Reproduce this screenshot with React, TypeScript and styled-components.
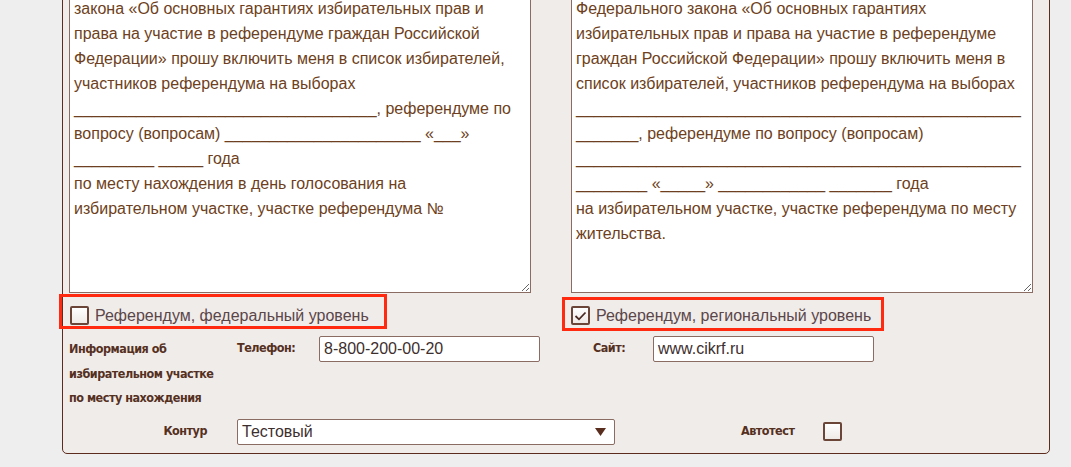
import React from "react";
import styled, { createGlobalStyle } from "styled-components";

const Global = createGlobalStyle`
  html, body { margin: 0; padding: 0; background: #eeeeee; overflow: hidden; }
  body { font-family: "Liberation Sans", Arial, sans-serif; }
  * { box-sizing: border-box; }
`;

const Page = styled.div`
  width: 1071px;
  height: 467px;
  overflow: hidden;
  padding-left: 62px;
`;

const Panel = styled.div`
  width: 988px;
  margin-top: -20px;
  padding: 12px 16px 8px 6px;
  background: #f0ece9;
  border: 1px solid #5c2d1e;
  border-radius: 0 0 5px 5px;
  display: flex;
  flex-direction: column;
`;

const Columns = styled.div`
  display: grid;
  grid-template-columns: 462px 462px;
  column-gap: 40px;
`;

const Column = styled.div`
  display: flex;
  flex-direction: column;
`;

const TextBox = styled.textarea`
  display: block;
  width: 462px;
  height: 300px;
  margin: 0;
  padding: 2px 4px;
  border: 1px solid #8a6c63;
  border-radius: 0;
  background: #ffffff;
  color: #6e3f20;
  font-family: "Liberation Sans", Arial, sans-serif;
  font-size: 16px;
  line-height: 25px;
  white-space: pre-wrap;
  overflow: hidden;
  outline: none;
`;

const CheckCell = styled.div`
  height: 43px;
  display: flex;
  align-items: flex-start;
`;

const Highlight = styled.label<{ $top: number; $left: number; $pl: number; $pt: number; $w: number; $h: number }>`
  display: flex;
  align-items: flex-start;
  gap: 6px;
  margin-top: ${(p) => p.$top}px;
  margin-left: ${(p) => p.$left}px;
  width: ${(p) => p.$w}px;
  height: ${(p) => p.$h}px;
  padding-left: ${(p) => p.$pl}px;
  padding-top: ${(p) => p.$pt}px;
  border: 3px solid #ff2a10;
`;

const Box = styled.span`
  flex: none;
  width: 19px;
  height: 19px;
  border: 2px solid #6a4538;
  border-radius: 2px;
  background: linear-gradient(#ffffff, #eeeae8);
  display: flex;
  align-items: center;
  justify-content: center;
`;

const CheckText = styled.span`
  font-family: "Liberation Sans", Arial, sans-serif;
  font-size: 16px;
  line-height: 19px;
  color: #5b4649;
  white-space: nowrap;
`;

const InfoRow = styled.div`
  display: grid;
  grid-template-columns: 168px 82px 221px 53px 60px 221px;
  align-items: start;
`;

const BoldLabel = styled.div<{ $right?: boolean }>`
  font-family: "Liberation Sans Narrow", "DejaVu Sans Condensed", "Roboto", sans-serif;
  font-weight: bold;
  font-size: 12.5px;
  letter-spacing: -0.5px;
  line-height: 24.5px;
  color: #55301f;
  white-space: nowrap;
  text-align: ${(p) => (p.$right ? "right" : "left")};
`;

const InfoText = styled(BoldLabel)`
  margin-top: 1px;
`;

const Field = styled.div<{ $width: number }>`
  width: ${(p) => p.$width}px;
  height: 26px;
  border: 1px solid #8a6c63;
  border-radius: 2px;
  background: #ffffff;
  padding: 0 4px;
  display: flex;
  align-items: center;
  justify-content: space-between;
  font-family: "Liberation Sans", Arial, sans-serif;
  font-size: 16px;
  color: #3e2f2f;
`;

const ContourRow = styled.div`
  display: flex;
  align-items: center;
  margin-top: 8px;
`;

const ContourLabel = styled(BoldLabel)`
  width: 138px;
  margin-right: 30px;
`;

const AutoLabel = styled(BoldLabel)`
  margin-left: 126px;
  margin-right: 29px;
`;

const Check = () => (
  <svg width="13" height="10" viewBox="0 0 13 10">
    <path d="M1.5 5 L5 8.3 L11.5 1.5" fill="none" stroke="#4a2a22" strokeWidth="1.8" />
  </svg>
);

const u = (n: number) => "_".repeat(n);

const leftText =
  "закона «Об основных гарантиях избирательных прав и\n" +
  "права на участие в референдуме граждан Российской\n" +
  "Федерации» прошу включить меня в список избирателей,\n" +
  "участников референдума на выборах\n" +
  u(34) + ", референдуме по\n" +
  "вопросу (вопросам) " + u(22) + " «" + u(3) + "»\n" +
  u(9) + " " + u(5) + " года\n" +
  "по месту нахождения в день голосования на\n" +
  "избирательном участке, участке референдума №";

const rightText =
  "Федерального закона «Об основных гарантиях\n" +
  "избирательных прав и права на участие в референдуме\n" +
  "граждан Российской Федерации» прошу включить меня в\n" +
  "список избирателей, участников референдума на выборах\n" +
  u(50) + "\n" +
  u(7) + ", референдуме по вопросу (вопросам)\n" +
  u(50) + "\n" +
  u(8) + " «" + u(5) + "» " + u(12) + " " + u(7) + " года\n" +
  "на избирательном участке, участке референдума по месту\n" +
  "жительства.";

export default function App() {
  return (
    <Page>
      <Global />
      <Panel>
        <Columns>
          <Column>
            <TextBox readOnly defaultValue={leftText} />
            <CheckCell>
              <Highlight $top={1} $left={-10} $pl={8} $pt={9} $w={328} $h={35}>
                <Box />
                <CheckText>Референдум, федеральный уровень</CheckText>
              </Highlight>
            </CheckCell>
          </Column>
          <Column>
            <TextBox readOnly defaultValue={rightText} />
            <CheckCell>
              <Highlight $top={4} $left={-9} $pl={6} $pt={6} $w={322} $h={34}>
                <Box>
                  <Check />
                </Box>
                <CheckText>Референдум, региональный уровень</CheckText>
              </Highlight>
            </CheckCell>
          </Column>
        </Columns>
        <InfoRow>
          <InfoText>
            Информация об
            <br />
            избирательном участке
            <br />
            по месту нахождения
          </InfoText>
          <BoldLabel>Телефон:</BoldLabel>
          <Field $width={221}>8-800-200-00-20</Field>
          <span />
          <BoldLabel>Сайт:</BoldLabel>
          <Field $width={221}>www.cikrf.ru</Field>
        </InfoRow>
        <ContourRow>
          <ContourLabel $right>Контур</ContourLabel>
          <Field $width={378}>
            <span>Тестовый</span>
            <svg width="11" height="8" viewBox="0 0 11 8" style={{ marginRight: 4 }}>
              <path d="M0 0 H11 L5.5 8 Z" fill="#5a2e1e" />
            </svg>
          </Field>
          <AutoLabel>Автотест</AutoLabel>
          <Box />
        </ContourRow>
      </Panel>
    </Page>
  );
}
